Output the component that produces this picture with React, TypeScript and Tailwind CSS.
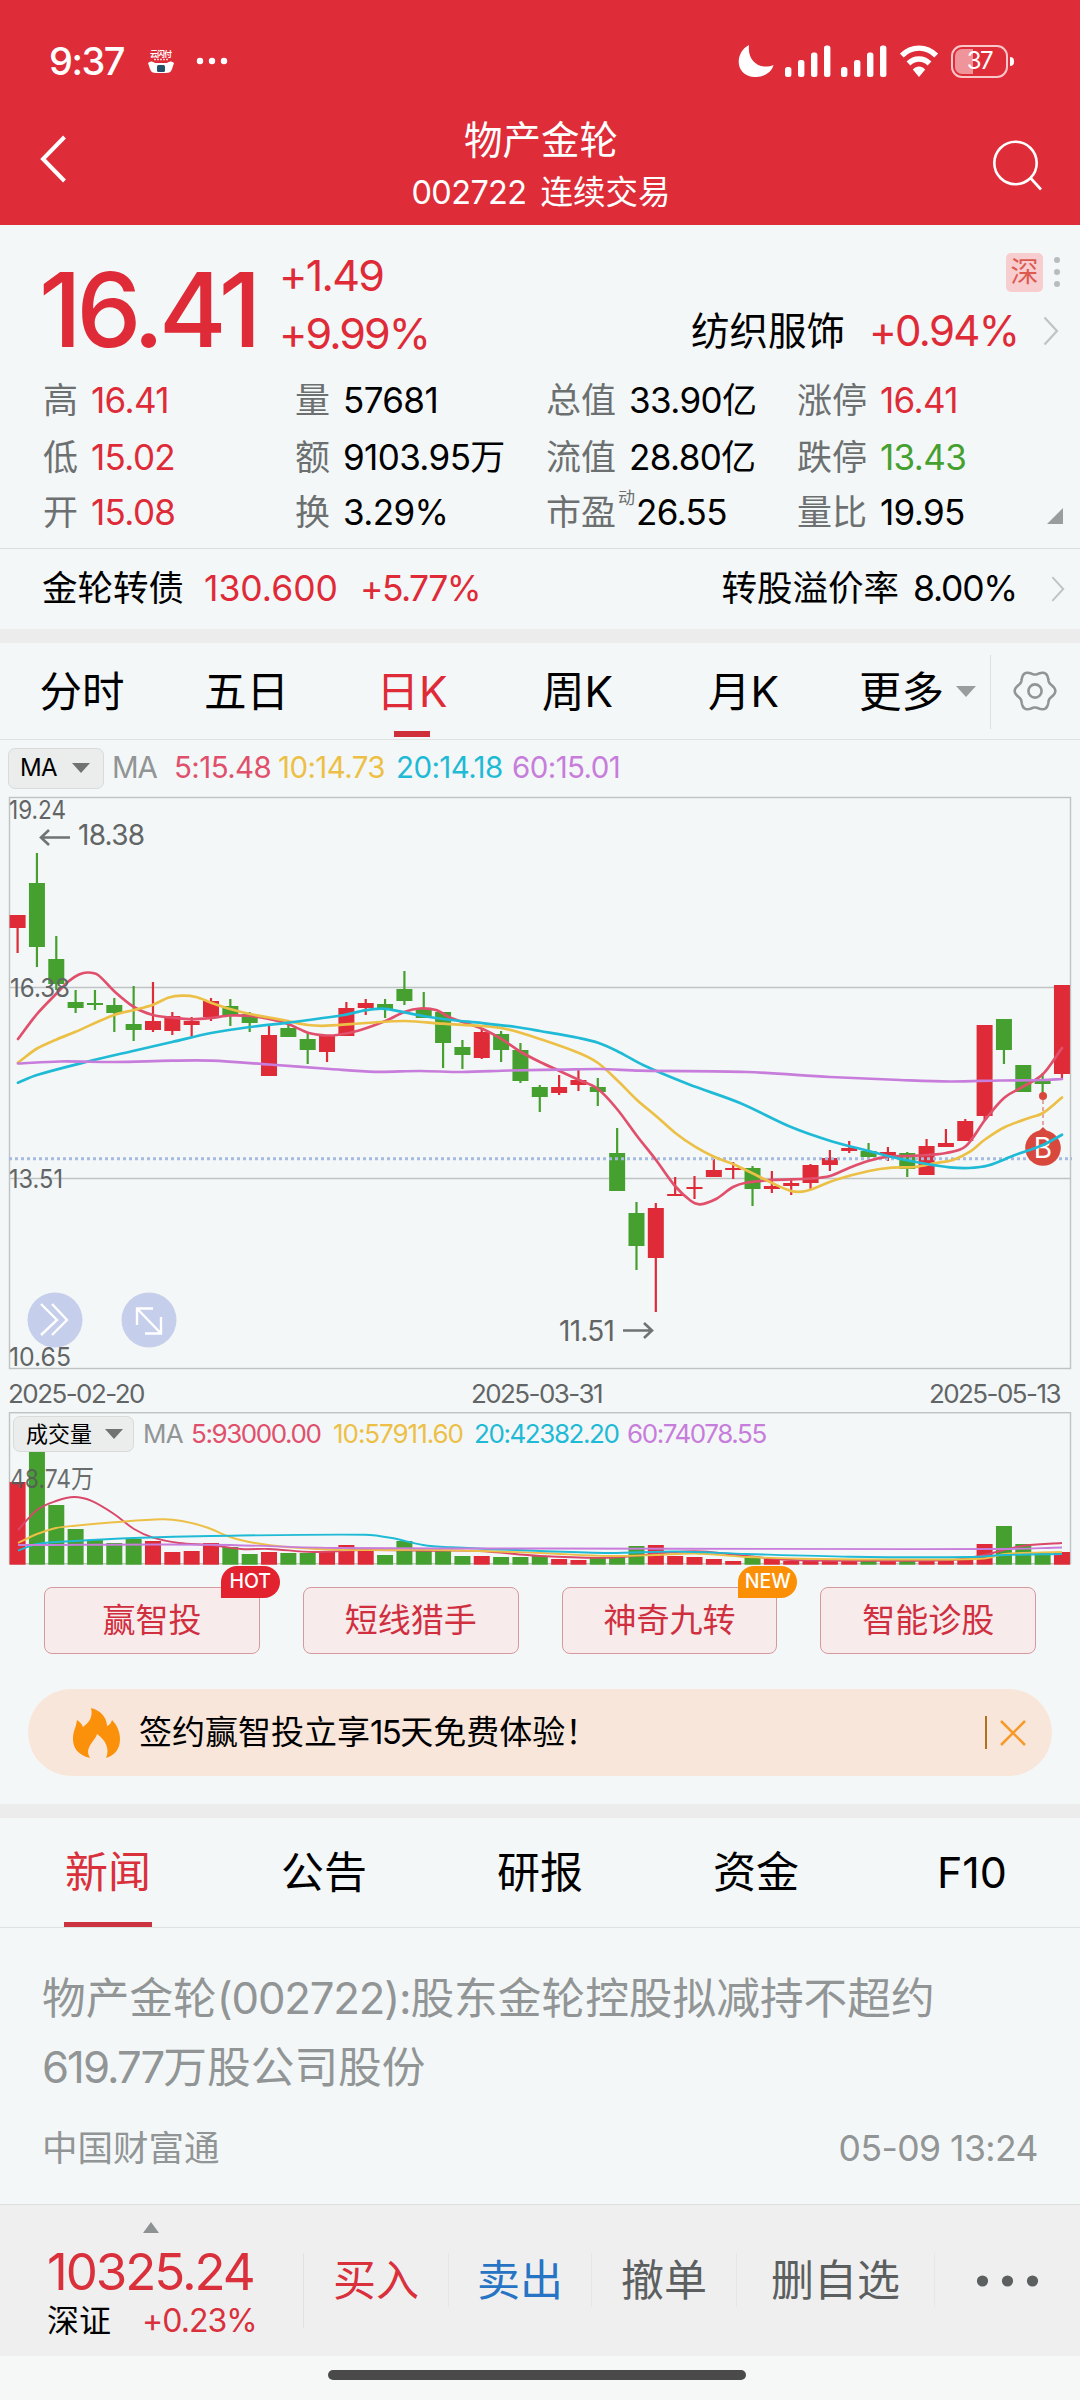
import type { ReactNode } from "react";
import clsx from "clsx";

type Point = [number, number];

// [direction, high, body top, body bottom, low, volume top]
type Candle = ["u" | "d", number, number, number, number, number];

const RED = "#de2b37";
const GREEN = "#45a02f";
const STEP = 19.34;
const FIRST_X = 17.6;

const candles: Candle[] = [
  ["u", 915, 915, 928, 953, 1482],
  ["d", 853, 883, 947, 967, 1452],
  ["d", 936, 959, 984, 990, 1505],
  ["d", 990, 1002, 1008, 1013, 1529],
  ["d", 990, 1003, 1005, 1010, 1540],
  ["d", 998, 1005, 1013, 1032, 1543],
  ["d", 986, 1024, 1030, 1041, 1539],
  ["u", 982, 1021, 1030, 1032, 1541],
  ["u", 1012, 1016, 1031, 1035, 1552],
  ["u", 1017, 1021, 1025, 1038, 1551],
  ["u", 998, 1001, 1017, 1021, 1543],
  ["d", 999, 1006, 1015, 1026, 1547],
  ["d", 1012, 1014, 1023, 1032, 1554],
  ["u", 1025, 1035, 1076, 1076, 1552],
  ["d", 1023, 1028, 1037, 1037, 1553],
  ["d", 1032, 1039, 1050, 1064, 1553],
  ["u", 1035, 1036, 1052, 1062, 1552],
  ["u", 1002, 1008, 1036, 1036, 1545],
  ["u", 999, 1003, 1008, 1015, 1551],
  ["d", 999, 1004, 1009, 1018, 1555],
  ["d", 971, 989, 1001, 1005, 1541],
  ["d", 992, 1009, 1018, 1018, 1551],
  ["d", 1012, 1012, 1043, 1068, 1551],
  ["d", 1040, 1047, 1055, 1069, 1556],
  ["u", 1028, 1032, 1058, 1059, 1556],
  ["d", 1031, 1034, 1050, 1062, 1557],
  ["d", 1043, 1050, 1081, 1083, 1557],
  ["d", 1085, 1087, 1097, 1112, 1556],
  ["u", 1075, 1087, 1093, 1095, 1559],
  ["u", 1070, 1080, 1085, 1091, 1560],
  ["d", 1078, 1087, 1092, 1106, 1558],
  ["d", 1128, 1153, 1191, 1191, 1557],
  ["d", 1202, 1213, 1246, 1270, 1546],
  ["u", 1203, 1208, 1258, 1312, 1545],
  ["u", 1177, 1194, 1196, 1196, 1556],
  ["u", 1176, 1187, 1189, 1199, 1557],
  ["u", 1159, 1170, 1177, 1177, 1559],
  ["u", 1162, 1168, 1170, 1179, 1561],
  ["d", 1166, 1168, 1189, 1206, 1557],
  ["u", 1171, 1186, 1189, 1193, 1559],
  ["u", 1180, 1183, 1186, 1195, 1561],
  ["u", 1164, 1165, 1183, 1190, 1560],
  ["u", 1150, 1158, 1165, 1171, 1559],
  ["u", 1141, 1148, 1151, 1153, 1559],
  ["d", 1143, 1151, 1157, 1161, 1560],
  ["u", 1147, 1152, 1155, 1161, 1561],
  ["d", 1152, 1153, 1169, 1177, 1560],
  ["u", 1139, 1146, 1175, 1175, 1560],
  ["u", 1129, 1143, 1147, 1147, 1561],
  ["u", 1119, 1121, 1141, 1141, 1560],
  ["u", 1025, 1025, 1116, 1120, 1544],
  ["d", 1019, 1019, 1050, 1064, 1526],
  ["d", 1065, 1065, 1092, 1092, 1544],
  ["d", 1073, 1080, 1084, 1093, 1552],
  ["u", 985, 985, 1074, 1078, 1552],
];

const priceLines: { color: string; points: Point[] }[] = [
  {
    color: "#e0506c",
    points: [
      [18, 1039], [37, 1014], [56, 994], [69, 981], [79, 974.5], [88, 972.5], [98, 975], [114, 991],
      [134, 1007], [153, 1015], [172, 1017.7], [192, 1019.3], [211, 1018], [230, 1015.5], [250, 1016],
      [269, 1019], [288, 1024], [308, 1032.7], [324, 1035.3], [337, 1035], [358, 1030.7], [386, 1020.7],
      [405, 1011.7], [420, 1008.5], [436, 1010], [451, 1018], [482, 1028.7], [501, 1038.7], [521, 1052],
      [540, 1062], [559, 1070.7], [579, 1080], [598, 1089], [617, 1109], [637, 1136], [656, 1160],
      [675, 1186], [691, 1201], [700, 1204.3], [716, 1199], [733, 1187], [747, 1182.5], [772, 1180],
      [811, 1178.5], [830, 1176], [850, 1167.5], [869, 1160.7], [888, 1156.7], [907, 1156], [927, 1155],
      [946, 1153], [966, 1146], [985, 1120], [1004, 1098], [1023, 1086.7], [1043, 1074], [1062, 1048],
    ],
  },
  {
    color: "#ecc046",
    points: [
      [18, 1062.7], [37, 1048.5], [56, 1039.7], [75, 1032], [114, 1015], [134, 1010], [153, 1004.7],
      [169, 997.5], [182, 995.7], [196, 997], [211, 1002.7], [230, 1009], [250, 1014], [269, 1017.5],
      [288, 1021], [308, 1025], [327, 1025.7], [366, 1023], [405, 1021], [443, 1023.7], [482, 1026],
      [506, 1029], [540, 1039], [579, 1053], [598, 1063], [617, 1080], [637, 1100], [656, 1116],
      [675, 1132.7], [695, 1146.7], [714, 1156.7], [733, 1164], [752, 1173], [772, 1183], [791, 1191],
      [802, 1191.7], [811, 1189.5], [836, 1179.7], [869, 1171], [892, 1167.7], [915, 1167], [936, 1163],
      [953, 1160], [970, 1151.7], [985, 1139.5], [1005, 1127], [1029, 1118], [1043, 1113], [1062, 1097.5],
    ],
  },
  {
    color: "#1fbad6",
    points: [
      [18, 1082.7], [37, 1075], [86, 1062], [134, 1050.7], [172, 1042], [211, 1033], [250, 1027],
      [288, 1022.7], [344, 1015], [365, 1010.3], [382, 1008.7], [396, 1010.7], [423, 1016], [451, 1020],
      [482, 1023], [516, 1027], [540, 1031], [579, 1038], [598, 1042.7], [617, 1051], [643, 1065],
      [688, 1084], [740, 1103], [791, 1127], [833, 1141.7], [869, 1151], [895, 1157.7], [927, 1164],
      [950, 1167.3], [969, 1168], [988, 1165.5], [1015, 1155], [1043, 1145], [1062, 1134.7],
    ],
  },
  {
    color: "#c77ddb",
    points: [
      [18, 1063.5], [60, 1061.5], [115, 1062], [172, 1060.7], [211, 1060.7], [269, 1064.5], [330, 1069],
      [375, 1071.8], [420, 1071], [462, 1072], [510, 1070.5], [560, 1069.7], [600, 1069], [640, 1070.7],
      [747, 1072], [830, 1077], [900, 1080], [950, 1081.5], [1000, 1080.5], [1043, 1080], [1062, 1079],
    ],
  },
];

const volumeLines: { color: string; points: Point[] }[] = [
  {
    color: "#d9486a",
    points: [
      [18, 1530], [37, 1510], [56, 1501], [74, 1497], [91, 1500.7], [114, 1514], [134, 1529], [153, 1537.7],
      [179, 1543], [211, 1545], [241, 1549], [269, 1549], [313, 1552], [365, 1550], [430, 1550.7],
      [479, 1551], [540, 1556], [609, 1557.7], [675, 1552], [702, 1551.5], [747, 1556], [791, 1560],
      [884, 1560.7], [953, 1560], [984, 1555], [1022, 1546], [1062, 1543],
    ],
  },
  {
    color: "#ecc046",
    points: [
      [18, 1543], [37, 1534], [56, 1528], [75, 1525.7], [114, 1522.3], [162, 1519.3], [182, 1521],
      [207, 1527.5], [230, 1537], [255, 1543], [286, 1547], [344, 1550], [437, 1550], [540, 1553],
      [609, 1556], [656, 1555], [695, 1553.5], [747, 1557], [815, 1559], [919, 1559.5], [984, 1558.5],
      [1005, 1554], [1062, 1552],
    ],
  },
  {
    color: "#1fbad6",
    points: [
      [18, 1550.7], [37, 1544], [75, 1541], [134, 1538], [211, 1536], [365, 1534.7], [392, 1538],
      [423, 1545], [451, 1547.3], [540, 1551], [609, 1553], [675, 1551.5], [747, 1554], [850, 1556.7],
      [970, 1557], [1005, 1555], [1062, 1554],
    ],
  },
  {
    color: "#c77ddb",
    points: [[18, 1545], [211, 1544.7], [337, 1548], [540, 1548.5], [1000, 1549], [1062, 1547.5]],
  },
];

// Catmull-Rom through the points, written as cubic segments
const toPath = (pts: Point[]) => {
  let d = `M${pts[0][0]} ${pts[0][1]}`;
  for (let i = 0; i < pts.length - 1; i++) {
    const p0 = pts[i - 1] ?? pts[i];
    const p1 = pts[i];
    const p2 = pts[i + 1];
    const p3 = pts[i + 2] ?? p2;
    const k = (p2[0] - p1[0]) / 3;
    const m1 = (p2[1] - p0[1]) / (p2[0] - p0[0]);
    const m2 = (p3[1] - p1[1]) / (p3[0] - p1[0]);
    d += `C${p1[0] + k} ${p1[1] + m1 * k} ${p2[0] - k} ${p2[1] - m2 * k} ${p2[0]} ${p2[1]}`;
  }
  return d;
};

// six soft lobes around the centre of a 44 box
const gearPoints = Array.from({ length: 120 }, (_, i) => {
  const a = (i / 120) * Math.PI * 2;
  const r = 18.4 + 1.9 * Math.cos(6 * a);
  return `${(22 + r * Math.cos(a)).toFixed(2)},${(22 + r * Math.sin(a)).toFixed(2)}`;
}).join(" ");

const stats = [
  ["高", "16.41", "text-[#de2b37]"],
  ["量", "57681", "text-black"],
  ["总值", "33.90亿", "text-black"],
  ["涨停", "16.41", "text-[#de2b37]"],
  ["低", "15.02", "text-[#de2b37]"],
  ["额", "9103.95万", "text-black"],
  ["流值", "28.80亿", "text-black"],
  ["跌停", "13.43", "text-[#45a02f]"],
  ["开", "15.08", "text-[#de2b37]"],
  ["换", "3.29%", "text-black"],
  ["市盈", "26.55", "text-black"],
  ["量比", "19.95", "text-black"],
];

const tools = [
  { label: "赢智投", badge: "HOT", badgeColor: "bg-[#e2222f]" },
  { label: "短线猎手" },
  { label: "神奇九转", badge: "NEW", badgeColor: "bg-[#fb9006]" },
  { label: "智能诊股" },
];

const newsTabs = ["新闻", "公告", "研报", "资金", "F10"];

const Chevron = ({ className }: { className?: string }) => (
  <svg viewBox="0 0 16 30" className={clsx("fill-none stroke-[#bfc3c4]", className)} strokeWidth="2.2">
    <path d="M1.5 1.5L14 15L1.5 28.5" />
  </svg>
);

const SignalBars = () => (
  <svg viewBox="0 0 46 32" className="h-8 w-[46px] fill-white">
    <rect x="0" y="22" width="6.4" height="10" rx="2.5" />
    <rect x="13" y="15" width="6.4" height="17" rx="2.5" />
    <rect x="26" y="7.5" width="6.4" height="24.5" rx="2.5" />
    <rect x="39" y="0.5" width="6.4" height="31.5" rx="2.5" />
  </svg>
);

const StatusBar = () => (
  <div className="flex h-[104px] items-center pt-[18px] pl-[49px]">
    <span className="w-[99px] text-[38px] leading-none font-medium tracking-[-0.04em]">9:37</span>
    <svg viewBox="0 0 26 24" className="h-6 w-[26px]">
      <text x="2" y="8" fontSize="8" fontWeight="700" fill="#fff" textLength="22">云闪付</text>
      <path d="M6 10.5h14" stroke="#ffd0d0" strokeWidth="1.4" strokeDasharray="2 1" />
      <path d="M0 14c2-2 4-2 7 0h12c3-2 5-2 7 0l-2 6c-1 3-3 4-6 4H8c-3 0-5-1-6-4z" fill="#fff" />
      <rect x="9" y="16" width="8" height="7" rx="1.5" fill="#25526b" />
    </svg>
    <svg viewBox="0 0 32 8" className="ml-[22px] h-2 w-8 fill-white">
      <circle cx="4" cy="4" r="3.2" />
      <circle cx="16" cy="4" r="3.2" />
      <circle cx="28" cy="4" r="3.2" />
    </svg>
    <svg viewBox="0 0 36 32" className="ml-[510px] h-8 w-9 fill-white">
      <path d="M11 0C-3 7-4 30 16 32C26 32.5 34 27 35.5 20C24 25 9 18 11 0Z" />
    </svg>
    <div className="ml-[11px] flex gap-[10px]">
      <SignalBars />
      <SignalBars />
    </div>
    <svg viewBox="0 0 38 32" className="ml-[13px] h-8 w-[38px] fill-none stroke-white" strokeWidth="5.4">
      <path d="M1.8 10.5C11.5 0.6 26.5 0.6 36.2 10.5" />
      <path d="M8.5 18.5C14.5 12.4 23.5 12.4 29.5 18.5" />
      <path d="M19 32L12.8 24.5C16.5 20.6 21.5 20.6 25.2 24.5Z" fill="#fff" stroke="none" />
    </svg>
    <div className="relative ml-[13px] flex h-[33px] w-[57px] items-center justify-center overflow-hidden rounded-[11px] border-[2.5px] border-[#f9c6ca]">
      <div className="absolute top-0.5 bottom-0.5 left-0.5 w-[18px] rounded-l-[7px] bg-[#f0949b]" />
      <span className="relative text-2xl leading-none tracking-[-0.06em]">37</span>
    </div>
    <div className="ml-[2px] h-[9px] w-[4px] rounded-r-full bg-white" />
  </div>
);

const Header = () => (
  <header className="h-[225px] bg-[#de2d39] text-white">
    <StatusBar />
    <div className="flex h-[121px] justify-between pr-[37px] pl-[39px]">
      <div className="w-[52px]">
        <svg viewBox="0 0 28 50" className="mt-[30px] h-[50px] w-7 fill-none stroke-white" strokeWidth="4">
          <path d="M25.5 3L4 25L25.5 47" />
        </svg>
      </div>
      <div className="flex flex-col items-center">
        <div className="mt-[16px] text-[38.5px] leading-[40px]">物产金轮</div>
        <div className="mt-[14px] text-[32.5px] leading-[38px]">
          <span className="tracking-[-0.02em]">002722</span>
          <span className="ml-[14px]">连续交易</span>
        </div>
      </div>
      <svg viewBox="0 0 52 52" className="mt-[35px] h-[52px] w-[52px] fill-none stroke-white" strokeWidth="2.6">
        <circle cx="24.5" cy="24" r="21.2" />
        <path d="M39.5 39L50 50.5" />
      </svg>
    </div>
  </header>
);

const Quote = () => (
  <section className="h-[323px] pt-[20px] pl-[43px]">
    <div className="flex h-[127px]">
      <div className="w-[239px] pt-[13px] text-[103px] leading-[103px] font-medium text-[#de2b37]">
        <span className="-ml-[4px] tracking-[-0.05em]">16.41</span>
      </div>
      <div className="-ml-[3px] pt-[1px] text-[43px] leading-[58px] tracking-[-0.04em] text-[#de2b37]">
        <div>+1.49</div>
        <div className="tracking-[-0.045em]">+9.99%</div>
      </div>
      <div className="ml-auto flex flex-col items-end pr-[21px]">
        <div className="-mr-px flex h-[54px] items-center gap-[11px]">
          <span className="flex h-[39px] w-[37px] items-center justify-center rounded-[5px] bg-[#f7cdd0] text-[28px] leading-none text-[#dc5a4f]">
            深
          </span>
          <svg viewBox="0 0 6 32" className="h-8 w-1.5 fill-[#b9bcbc]">
            <circle cx="3" cy="4" r="3" />
            <circle cx="3" cy="16" r="3" />
            <circle cx="3" cy="28" r="3" />
          </svg>
        </div>
        <div className="flex h-[64px] items-center">
          <span className="text-[38.5px] leading-none">纺织服饰</span>
          <span className="ml-[24px] w-[174px] text-[42px] leading-none tracking-[-0.04em] text-[#de2b37]">+0.94%</span>
          <Chevron className="h-[30px] w-4" />
        </div>
      </div>
    </div>
    <div className="flex">
      <div className="grid grid-cols-[252px_251px_251px_240px] grid-rows-[57px_57px_53px] items-center text-[35px] leading-none">
        {stats.map(([label, value, color]) => (
          <div key={label} className="flex items-center whitespace-nowrap">
            <span className="text-[#6c7071]">{label}</span>
            {label === "市盈" ? (
              <span className="-mt-[28px] w-[20px] pl-[2px] text-[17px] text-[#6c7071]">动</span>
            ) : (
              <span className="w-[13px]" />
            )}
            <span className={clsx("tracking-[-0.018em]", color)}>{value}</span>
          </div>
        ))}
      </div>
      <svg viewBox="0 0 16 16" className="mt-[136px] ml-[10px] h-4 w-4 fill-[#9a9d9d]">
        <path d="M16 0V16H0Z" />
      </svg>
    </div>
  </section>
);

const BondRow = () => (
  <section className="flex h-[81px] items-center border-t border-[#dcdfdf] pr-[15px] pl-[42px] text-[35.5px] leading-none text-black">
    <span className="w-[162px]">金轮转债</span>
    <span className="w-[156px] text-[#de2b37]">130.600</span>
    <span className="tracking-[-0.045em] text-[#de2b37]">+5.77%</span>
    <span className="ml-auto">转股溢价率</span>
    <span className="ml-[14px] w-[138px] tracking-[-0.035em]">8.00%</span>
    <Chevron className="h-[28px] w-[14px]" />
  </section>
);

const Band = () => <div className="h-[14px] bg-[#ececec]" />;

const PeriodTabs = () => (
  <nav className="flex h-[97px] border-b border-[#dfe1e1] text-[42.5px] leading-[97px] text-black">
    <span className="w-[164px] text-center">分时</span>
    <span className="w-[165px] text-center">五日</span>
    <span className="flex w-[166px] flex-col items-center text-[#de2b37]">
      <span className="h-[88px]">日K</span>
      <span className="h-[6px] w-9 bg-[#cf2f3a]" />
    </span>
    <span className="w-[165px] text-center">周K</span>
    <span className="w-[167px] text-center">月K</span>
    <span className="flex w-[163px] items-center pl-[32px]">
      更多
      <svg viewBox="0 0 20 11" className="ml-[12px] h-[11px] w-5 fill-[#9a9d9d]">
        <path d="M0 0H20L10 11Z" />
      </svg>
    </span>
    <span className="mt-[12px] h-[74px] w-px bg-[#dfe1e1]" />
    <svg viewBox="0 0 44 44" className="mt-[26px] ml-[22px] h-11 w-11 fill-none stroke-[#929596]" strokeWidth="2.6">
      <polygon points={gearPoints} />
      <circle cx="22" cy="22" r="6.6" />
    </svg>
  </nav>
);

const Picker = ({ children, className }: { children: ReactNode; className: string }) => (
  <span
    className={clsx(
      "flex items-center justify-between rounded-[7px] border border-[#d9dada] bg-[#ebecec] text-black",
      className,
    )}
  >
    {children}
    <svg viewBox="0 0 18 10" className="h-[10px] w-[18px] fill-[#707373]">
      <path d="M0 0H18L9 10Z" />
    </svg>
  </span>
);

const MaRow = () => (
  <div className="flex h-[56px] items-center pl-[8px] text-[29.5px] leading-none tracking-[-0.02em]">
    <Picker className="h-[41px] w-[96px] pr-[13px] pl-[11px] text-[24px]">MA</Picker>
    <span className="w-[62px] pl-[8px] tracking-[-0.04em] text-[#919596]">MA</span>
    <span className="w-[105px] pl-[8px] text-[#e0506c]">5:15.48</span>
    <span className="w-[117px] pl-[7px] text-[#ecc046]">10:14.73</span>
    <span className="w-[116px] pl-[8px] text-[#1fbad6]">20:14.18</span>
    <span className="pl-[8px] text-[#c77ddb]">60:15.01</span>
  </div>
);

const PriceChart = () => (
  <svg viewBox="0 796 1080 576" className="block h-[576px] w-[1080px]">
    <g fill="none" stroke="#bfc3c3" strokeWidth="1.4">
      <rect x="9.5" y="797.5" width="1061" height="571" />
      <path d="M9.5 987.5H1070M9.5 1178.5H1070" />
    </g>
    {candles.map(([dir, high, top, bottom, low], i) => {
      const x = FIRST_X + i * STEP;
      return (
        <g key={i} fill={dir === "u" ? RED : GREEN}>
          <rect x={x - 1.1} y={high} width="2.2" height={low - high} />
          <rect x={x - 8} y={top} width="16" height={bottom - top} />
        </g>
      );
    })}
    <path d="M9 1158.7H1072" stroke="#a5bbdf" strokeWidth="3" strokeDasharray="3 3" />
    <circle cx="1043" cy="1096" r="4" fill="#d8483c" />
    <path d="M1043 1100V1130" stroke="#d98f88" strokeWidth="1.5" strokeDasharray="4 3" />
    <path d="M1043 1127L1050 1134H1036Z" fill="#d8483c" />
    <circle cx="1043" cy="1148" r="17.8" fill="#d8483c" />
    <text x="1043" y="1158" fontSize="28" fill="#fff" textAnchor="middle">B</text>
    {priceLines.map((line) => (
      <path key={line.color} d={toPath(line.points)} fill="none" stroke={line.color} strokeWidth="2.7" strokeLinecap="round" />
    ))}
    <g fill="#626566" fontSize="26">
      <text x="9" y="819" textLength="57" lengthAdjust="spacingAndGlyphs">19.24</text>
      <text x="10" y="997" textLength="60" lengthAdjust="spacingAndGlyphs">16.38</text>
      <text x="9" y="1188" textLength="54" lengthAdjust="spacingAndGlyphs">13.51</text>
      <text x="9" y="1366" textLength="62" lengthAdjust="spacingAndGlyphs">10.65</text>
      <text x="78" y="845" fontSize="28" textLength="67">18.38</text>
      <text x="559" y="1341" fontSize="28" textLength="56">11.51</text>
    </g>
    <g fill="none" stroke="#707373" strokeWidth="2.6">
      <path d="M70 837.5H41M49 830L41 837.5L49 845" />
      <path d="M623 1330.5H652M644 1323L652 1330.5L644 1338" />
    </g>
    <g fill="#c5cfeb">
      <circle cx="55" cy="1320" r="27.5" />
      <circle cx="149" cy="1320" r="27.5" />
    </g>
    <g fill="none" stroke="#fff" strokeWidth="2.4">
      <path d="M41 1304L57 1320L41 1335M52 1304L67 1320L52 1335" />
      <path d="M153 1308.5H137V1325M137 1308.5L161 1333.5M145 1333.5H161V1317" />
    </g>
  </svg>
);

const VolumeChart = () => (
  <div className="relative h-[154px]">
    <svg viewBox="0 1412 1080 154" className="block h-[154px] w-[1080px]">
      <rect x="9.5" y="1412.7" width="1061" height="151" fill="none" stroke="#bfc3c3" strokeWidth="1.4" />
      {candles.map(([dir, , , , , top], i) => (
        <rect key={i} x={FIRST_X + i * STEP - 8} y={top} width="16" height={1564.7 - top} fill={dir === "u" ? RED : GREEN} />
      ))}
      {volumeLines.map((line) => (
        <path key={line.color} d={toPath(line.points)} fill="none" stroke={line.color} strokeWidth="1.9" />
      ))}
      <text x="10" y="1488" fontSize="26" fill="#565a5b" fillOpacity="0.9" textLength="84" lengthAdjust="spacingAndGlyphs">48.74万</text>
    </svg>
    <div className="absolute top-[4px] left-[13px] flex items-center text-[26px] leading-none tracking-[-0.055em] whitespace-nowrap">
      <Picker className="h-[36px] w-[121px] pr-[10px] pl-[12px] text-[22px] tracking-normal">成交量</Picker>
      <span className="w-[57px] pl-[9px] tracking-[-0.03em] text-[#919596]">MA</span>
      <span className="w-[142px] text-[#e0506c]">5:93000.00</span>
      <span className="w-[141px] tracking-[-0.04em] text-[#ecc046]">10:57911.60</span>
      <span className="w-[153px] text-[#1fbad6]">20:42382.20</span>
      <span className="text-[#c77ddb]">60:74078.55</span>
    </div>
  </div>
);

const Tools = () => (
  <section className="grid grid-cols-4 gap-[43px] px-[44px] pt-[21px]">
    {tools.map((tool) => (
      <div
        key={tool.label}
        className="relative flex h-[67px] items-center justify-center rounded-[8px] border border-[#d59aa0] bg-[#f8ebec] text-[33px] leading-none text-[#d02f40]"
      >
        {tool.label}
        {tool.badge && (
          <span
            className={clsx(
              "absolute -top-[22px] -right-[21px] flex h-[32px] w-[59px] items-center justify-center rounded-[16px] rounded-bl-none text-[19.5px] font-medium text-white",
              tool.badgeColor,
            )}
          >
            {tool.badge}
          </span>
        )}
      </div>
    ))}
  </section>
);

const Banner = () => (
  <section className="mx-[28px] mt-[35px] mb-[28px] flex h-[87px] items-center rounded-full bg-[#f9e6da] pr-[26px] pl-[44px]">
    <svg viewBox="0 0 48 50" className="h-[50px] w-12 fill-[#fb900a]">
      <path d="M19 0C28 2 35 9 35 18C38 17 39 15 40 12C45 17 48 24 48 31C48 41 43 47 34 50C38 42 34 32 25 26C24 31 16 37 16 44C16 46 17 48 18 50C6 47 1 40 1 31C1 23 4 20 5 12C8 14 10 16 11 19C18 14 21 8 19 0Z" />
    </svg>
    <span className="ml-[19px] text-[33px] leading-none text-black">
      签约赢智投立享<span className="tracking-[-0.05em]">15</span>天免费体验！
    </span>
    <span className="ml-auto h-[33px] w-0.5 bg-[#b0701c]" />
    <svg viewBox="0 0 26 26" className="ml-[13px] h-[26px] w-[26px] stroke-[#f59a2b]" strokeWidth="2.6">
      <path d="M1 1L25 25M25 1L1 25" />
    </svg>
  </section>
);

const NewsTabs = () => (
  <nav className="grid h-[110px] grid-cols-5 border-b border-[#dfe1e1] text-center text-[43px] leading-[109px] text-black">
    {newsTabs.map((tab, i) => (
      <span key={tab} className={clsx("flex flex-col items-center", i === 0 && "text-[#d9303c]")}>
        <span className="h-[104px]">{tab}</span>
        {i === 0 && <span className="h-[5px] w-[88px] bg-[#cb3341]" />}
      </span>
    ))}
  </nav>
);

const NewsItem = () => (
  <article className="h-[276px] pt-[36px] pr-[42px] pl-[42px] text-[#919596]">
    <h2 className="text-[43.7px] leading-[69px]">
      物产金轮<span className="tracking-[-0.027em]">(002722):</span>股东金轮控股拟减持不超约
      <br />
      <span className="tracking-[-0.045em]">619.77</span>万股公司股份
    </h2>
    <div className="mt-[24px] flex justify-between text-[35.5px] leading-[46px]">
      <span>中国财富通</span>
      <span className="tracking-[-0.015em]">05-09 13:24</span>
    </div>
  </article>
);

const ActionBar = () => (
  <footer className="flex h-[152px] border-t border-[#dedede] bg-[#efefef] text-[43px] leading-none text-[#5c5f60]">
    <div className="w-[303px] pl-[47px]">
      <svg viewBox="0 0 16 11" className="mt-[17px] ml-[96px] h-[11px] w-4 fill-[#8f9292]">
        <path d="M8 0L16 11H0Z" />
      </svg>
      <div className="mt-[14px] text-[51px] leading-[50px] tracking-[-0.04em] text-[#d9303c]">10325.24</div>
      <div className="mt-[8px] flex items-center text-[32px]">
        <span className="w-[95px] text-black">深证</span>
        <span className="tracking-[-0.03em] text-[#d9303c]">+0.23%</span>
      </div>
    </div>
    <span className="mt-[48px] h-[75px] w-px bg-[#e2e2e2]" />
    <span className="w-[144px] pt-[54px] text-center text-[#d9303c]">买入</span>
    <span className="mt-[48px] h-[54px] w-px bg-[#e6e6e6]" />
    <span className="w-[142px] pt-[54px] text-center text-[#2773c4]">卖出</span>
    <span className="mt-[48px] h-[54px] w-px bg-[#e6e6e6]" />
    <span className="w-[144px] pt-[54px] text-center">撤单</span>
    <span className="mt-[48px] h-[54px] w-px bg-[#e6e6e6]" />
    <span className="w-[197px] pt-[54px] text-center">删自选</span>
    <span className="mt-[48px] h-[54px] w-px bg-[#e6e6e6]" />
    <svg viewBox="0 0 64 12" className="mt-[70px] ml-[41px] h-3 w-16 fill-current">
      <circle cx="6.5" cy="6" r="5.6" />
      <circle cx="31.5" cy="6" r="5.6" />
      <circle cx="56.5" cy="6" r="5.6" />
    </svg>
  </footer>
);

const App = () => {
  return (
    <div className="h-[2400px] w-[1080px] overflow-hidden bg-[#f4f7f7] font-[Inter,'Noto_Sans_CJK_SC',sans-serif]">
      <Header />
      <Quote />
      <BondRow />
      <Band />
      <PeriodTabs />
      <MaRow />
      <PriceChart />
      <div className="flex h-[40px] justify-between pr-[20px] pl-[8px] text-[26px] leading-[43px] tracking-[-0.06em] text-[#626566]">
        <span>2025-02-20</span>
        <span>2025-03-31</span>
        <span>2025-05-13</span>
      </div>
      <VolumeChart />
      <Tools />
      <Banner />
      <Band />
      <NewsTabs />
      <NewsItem />
      <ActionBar />
      <div className="flex h-[44px] justify-center bg-[#f6f7f7] pt-[14px] pr-[6px]">
        <div className="h-[10px] w-[418px] rounded-full bg-[#4a4a4a]" />
      </div>
    </div>
  );
};

export default App;
